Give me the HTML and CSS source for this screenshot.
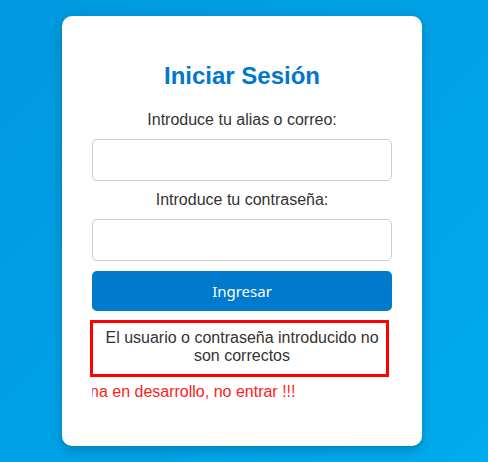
FILE: index.html
```html
<!DOCTYPE html>
<html lang="es">
<head>
<meta charset="utf-8">
<title>Iniciar Sesión</title>
<link rel="stylesheet" href="styles.css">
</head>
<body>
<div class="card">
  <h2 class="title">Iniciar Sesión</h2>
  <form class="form">
    <label class="label" for="user">Introduce tu alias o correo:</label>
    <input class="field" id="user" type="text">
    <label class="label" for="pass">Introduce tu contraseña:</label>
    <input class="field" id="pass" type="password">
    <button class="btn" type="button">Ingresar</button>
    <div class="error">El usuario o contraseña introducido no son correctos</div>
    <div class="marquee"><span class="marquee-text">Página en desarrollo, no entrar !!!</span></div>
  </form>
</div>
</body>
</html>
```
FILE: styles.css
```css
html, body {
  margin: 0;
  padding: 0;
}
body {
  width: 488px;
  height: 462px;
  overflow: hidden;
  background: linear-gradient(135deg, #0098de, #00abee);
  font-family: "Liberation Sans", Arial, sans-serif;
  color: #333;
}
.card {
  box-sizing: border-box;
  width: 360px;
  height: 430px;
  margin: 16px 0 0 62px;
  padding: 46px 30px 0;
  background: #fff;
  border-radius: 10px;
  box-shadow: 0 4px 12px rgba(0, 0, 0, 0.22);
}
.title {
  margin: 0 0 21px;
  font-size: 24px;
  font-weight: bold;
  color: #0077cc;
  text-align: center;
  line-height: normal;
}
.form {
  display: flex;
  flex-direction: column;
  gap: 10px;
}
.label {
  font-size: 16px;
  text-align: center;
  color: #333;
}
.field {
  box-sizing: border-box;
  width: 100%;
  height: 42px;
  margin: 0;
  border: 1px solid #ccc;
  border-radius: 5px;
  background: #fff;
}
.btn {
  height: 40px;
  margin: 0;
  border: none;
  border-radius: 5px;
  background: #007acc;
  color: #fff;
  font-family: "Noto Sans", "Open Sans", sans-serif;
  font-size: 15px;
}
.error {
  box-sizing: border-box;
  width: 299px;
  margin: -1px 0 0 -2px;
  padding: 6px 4px 9px 9px;
  border: 3px solid #ff0000;
  font-size: 16px;
  text-align: center;
  color: #333;
}
.marquee {
  margin-top: -4px;
  overflow: hidden;
  white-space: nowrap;
  font-size: 16px;
  color: #ff2020;
}
.marquee-text {
  display: inline-block;
  margin-left: -34px;
}
```
